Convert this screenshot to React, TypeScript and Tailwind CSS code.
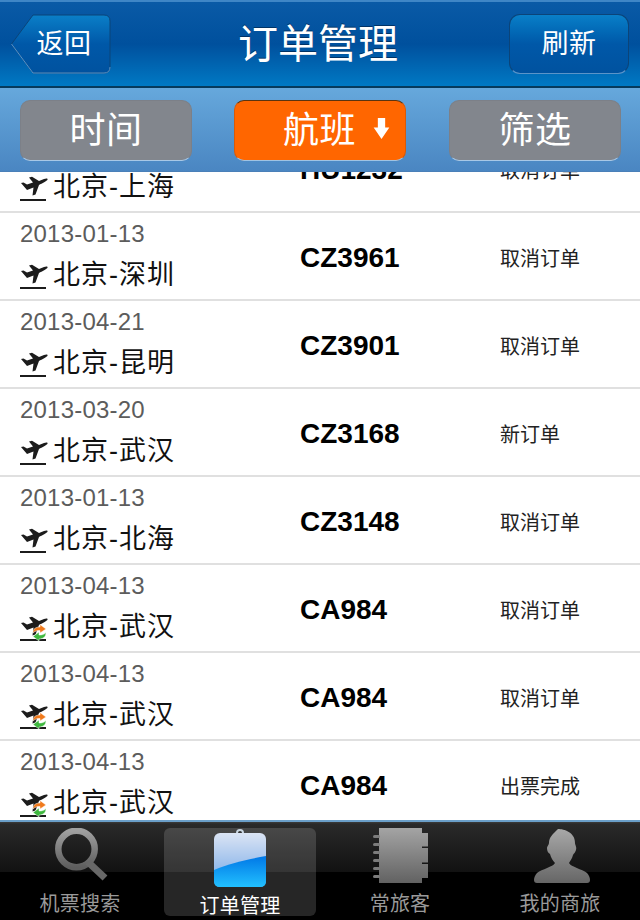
const font = "font-['Liberation_Sans','Noto_Sans_CJK_SC',sans-serif]";

const rows = [
  { date: "2013-01-13", route: "北京-上海", flight: "HU1232", status: "取消订单", transfer: false },
  { date: "2013-01-13", route: "北京-深圳", flight: "CZ3961", status: "取消订单", transfer: false },
  { date: "2013-04-21", route: "北京-昆明", flight: "CZ3901", status: "取消订单", transfer: false },
  { date: "2013-03-20", route: "北京-武汉", flight: "CZ3168", status: "新订单", transfer: false },
  { date: "2013-01-13", route: "北京-北海", flight: "CZ3148", status: "取消订单", transfer: false },
  { date: "2013-04-13", route: "北京-武汉", flight: "CA984", status: "取消订单", transfer: true },
  { date: "2013-04-13", route: "北京-武汉", flight: "CA984", status: "取消订单", transfer: true },
  { date: "2013-04-13", route: "北京-武汉", flight: "CA984", status: "出票完成", transfer: true },
];

function PlaneIcon({ transfer }: { transfer: boolean }) {
  return (
    <svg width="28" height="30" viewBox="0 0 28 30" className="shrink-0">
      <path d="M1 12 L3.5 11.5 L7 13.5 L13 11.5 L9 6.5 L12 5.8 L19 10 L24 8 C26.5 7 28 7.5 27.5 8.8 C27 10 22 12.5 19 14 L15.5 23.5 L12.5 24.5 L13.5 16.5 L7 19 Z" fill="#1c1c1c" />
      <rect x="0" y="28" width="26" height="2" fill="#1c1c1c" />
      {transfer && (
        <g>
          <path d="M13 22 C13 17.5 16 16 20 16 L20 13.5 L26 18 L20 22 L20 19.5 C17 19.5 15 20 13 22 Z" fill="#f07a1c" stroke="#fff" strokeWidth="0.5" />
          <path d="M26 21.5 C26 26 23 28 19 28 L19 30 L13 25.5 L19 21 L19 24 C22 24 24 23.5 26 21.5 Z" fill="#3fb83f" stroke="#fff" strokeWidth="0.5" />
        </g>
      )}
    </svg>
  );
}

function Row({ r }: { r: (typeof rows)[number] }) {
  return (
    <div className="h-[88px] shrink-0 flex items-stretch bg-white border-b-2 border-[#e0e0e0]">
      <div className="w-[300px] pl-5 flex flex-col">
        <div className="h-[44px] pt-[6px] text-[24px] leading-[30px] tracking-[0.2px] text-[#5c5c5c]">{r.date}</div>
        <div className="flex items-start h-[36px]">
          <div className="w-[33px] pt-[2px]"><PlaneIcon transfer={r.transfer} /></div>
          <span className="pt-[1px] text-[27px] leading-[34px] tracking-[1px] text-[#111]">{r.route}</span>
        </div>
      </div>
      <div className="w-[201px] pt-[4px] flex items-center text-[28px] font-bold text-black">{r.flight}</div>
      <div className="flex-1 pt-[5px] -ml-[1px] flex items-center text-[20px] text-[#222]">{r.status}</div>
    </div>
  );
}

function NavButton({ children, back }: { children: string; back?: boolean }) {
  const label = "text-[27px] leading-none text-white tracking-[0.5px]";
  if (back) {
    return (
      <div className="relative w-[100px] h-[60px] ml-[11px] flex items-center justify-center">
        <svg width="100" height="60" viewBox="0 0 100 60" className="absolute inset-0">
          <defs>
            <linearGradient id="navb" x1="0" y1="0" x2="0" y2="1">
              <stop offset="0" stopColor="#0a7fc8" />
              <stop offset="0.5" stopColor="#0058a8" />
              <stop offset="1" stopColor="#00529f" />
            </linearGradient>
          </defs>
          <path d="M0.5 30 L22 1 H93 Q99 1 99 7 V53 Q99 59 93 59 H22 Z" fill="url(#navb)" stroke="#0b4479" />
          <path d="M0.5 30 L22 59 H93 Q99 59 99 53" fill="none" stroke="#5b94c8" />
        </svg>
        <span className={`relative pl-[6px] ${label}`}>{children}</span>
      </div>
    );
  }
  return (
    <div className="w-[120px] h-[60px] mr-[11px] rounded-[11px] border border-[#0b4479] border-b-[#5b94c8] bg-gradient-to-b from-[#0a7fc8] via-[#0058a8] to-[#00529f] flex items-center justify-center">
      <span className={label}>{children}</span>
    </div>
  );
}

function TabFilter({ label, active }: { label: string; active?: boolean }) {
  return (
    <div
      className={
        active
          ? "w-[172px] h-[61px] rounded-[10px] bg-[#ff6600] border border-[#d85a08] border-t-[#5a3410] border-b-[#9fc3e3] flex items-center gap-[17px] pl-[48px]"
          : "w-[172px] h-[61px] rounded-[10px] bg-[#82868d] border border-[#7c8088] border-b-[#a8c8e6] flex items-center justify-center"
      }
    >
      <span className="text-[36px] leading-none tracking-[0.5px] text-white">{label}</span>
      {active && (
        <svg width="17" height="23" viewBox="0 0 16 22" className="-mt-[4px]">
          <path d="M4.5 1 H11.5 V10 H15.5 L8 21 L0.5 10 H4.5 Z" fill="#fff" />
        </svg>
      )}
    </div>
  );
}

function SearchIcon() {
  return (
    <svg width="56" height="56" viewBox="0 0 56 56">
      <defs>
        <linearGradient id="tg1" x1="0" y1="0" x2="0" y2="1">
          <stop offset="0" stopColor="#a0a0a0" />
          <stop offset="1" stopColor="#5e5e5e" />
        </linearGradient>
      </defs>
      <circle cx="24.5" cy="21" r="18.2" fill="none" stroke="url(#tg1)" strokeWidth="6.5" />
      <path d="M36 34 L53 50" stroke="#686868" strokeWidth="7" />
    </svg>
  );
}

function BookIcon() {
  return (
    <svg width="56" height="56" viewBox="0 0 56 56" className="ml-[1px]">
      <defs>
        <linearGradient id="tg2" x1="0" y1="0" x2="0" y2="1">
          <stop offset="0" stopColor="#a4a4a4" />
          <stop offset="1" stopColor="#626262" />
        </linearGradient>
      </defs>
      <path d="M6 0 H49 V5 H55 V18.5 H49 V20 H55 V34.5 H49 V36 H55 V50 H49 V55 H6 Z" fill="url(#tg2)" />
      {[9, 17, 25, 33, 41, 49].map((y) => (
        <rect key={y} x="0" y={y - 2} width="7" height="3" rx="1.5" fill="#7c7c7c" />
      ))}
    </svg>
  );
}

function PersonIcon() {
  return (
    <svg width="56" height="56" viewBox="0 0 56 56" className="ml-[4px]">
      <defs>
        <linearGradient id="tg3" x1="0" y1="0" x2="0" y2="1">
          <stop offset="0" stopColor="#a8a8a8" />
          <stop offset="1" stopColor="#666" />
        </linearGradient>
      </defs>
      <path d="M24 1 C30 1 41 4 41 15 C41 17 43 19 42 22 C41 25 40 25 39 27 C38 31 36 33 35 35 C37 39 48 41 53 45 C55 47 56 50 56 52 C56 54 55 55 53 55 H3 C1 55 0 54 0 52 C0 50 1 47 3 45 C8 41 19 39 21 35 C19 33 17 30 16 26 C14 25 13 23 13 20 C13 18 15 17 15 15 C15 9 19 6 24 1 Z" fill="url(#tg3)" />
    </svg>
  );
}

function ClipIcon() {
  return (
    <div className="relative w-[52px] h-[58px]">
      <div className="absolute left-[22px] top-[1px] w-[8px] h-[6px] rounded-t-[4px] border-2 border-[#c9d5e0] bg-[#333]" />
      <svg width="52" height="54" viewBox="0 0 52 54" className="absolute left-0 top-[5px]">
        <defs>
          <linearGradient id="cl1" x1="0" y1="0" x2="0" y2="1">
            <stop offset="0" stopColor="#dbe4f4" />
            <stop offset="1" stopColor="#6fa5e6" />
          </linearGradient>
          <linearGradient id="cl2" x1="0" y1="0" x2="0" y2="1">
            <stop offset="0" stopColor="#0077e6" />
            <stop offset="1" stopColor="#22c0ff" />
          </linearGradient>
        </defs>
        <rect x="0" y="0" width="52" height="54" rx="6" fill="url(#cl1)" />
        <path d="M0 37 C16 30 36 26 52 23 V48 Q52 54 46 54 H6 Q0 54 0 48 Z" fill="url(#cl2)" />
      </svg>
    </div>
  );
}

function Tab({ label, active, children }: { label: string; active?: boolean; children: React.ReactNode }) {
  return (
    <div className={active ? "w-[152px] h-[88px] mt-[6px] rounded-[6px] bg-white/15 flex flex-col items-center" : "w-[152px] h-[88px] mt-[6px] flex flex-col items-center"}>
      <div className="h-[58px] flex items-start justify-center">{children}</div>
      <div className={active ? "mt-[8px] text-[20px] leading-[24px] tracking-[0.2px] text-white" : "mt-[8px] text-[20px] leading-[24px] tracking-[0.2px] text-[#9a9a9a]"}>{label}</div>
    </div>
  );
}

export default function App() {
  return (
    <div className={`w-[640px] h-[920px] flex flex-col overflow-hidden bg-white ${font}`}>
      <header className="h-[88px] shrink-0 flex items-center justify-between border-t-2 border-t-[#3f86c6] border-b-2 border-b-[#063a5c] bg-gradient-to-b from-[#0a5aa6] via-[#00509d] to-[#0079c4]">
        <NavButton back>返回</NavButton>
        <h1 className="ml-[16px] text-[40px] leading-none font-normal text-white [text-shadow:0_-1px_0_#003366]">订单管理</h1>
        <NavButton>刷新</NavButton>
      </header>
      <div className="h-[84px] shrink-0 flex items-start pl-[20px] pt-[12px] bg-gradient-to-b from-[#66a8dc] to-[#4a86c2] border-b border-[#4a80b8]">
        <TabFilter label="时间" />
        <div className="ml-[42px] mr-[43px]">
          <TabFilter label="航班" active />
        </div>
        <TabFilter label="筛选" />
      </div>
      <main className="flex-1 min-h-0 overflow-hidden">
        <div className="-mt-[47px] flex flex-col">
          {rows.map((r, i) => (
            <Row key={i} r={r} />
          ))}
        </div>
      </main>
      <nav className="h-[100px] shrink-0 flex justify-between px-[4px] border-t-2 border-t-[#6b9fc9] bg-[linear-gradient(to_bottom,#3c3c3c_0,#2a2a2a_2px,#121212_50px,#000_50px,#000_100%)]">
        <Tab label="机票搜索"><SearchIcon /></Tab>
        <Tab label="订单管理" active><ClipIcon /></Tab>
        <Tab label="常旅客"><BookIcon /></Tab>
        <Tab label="我的商旅"><PersonIcon /></Tab>
      </nav>
    </div>
  );
}
